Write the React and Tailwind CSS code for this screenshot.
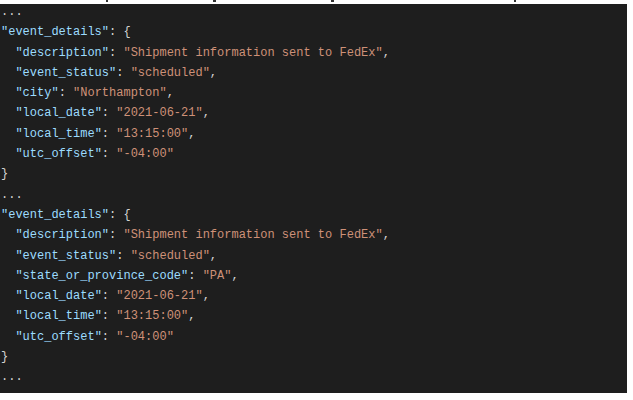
const K = 'text-[#9cdcfe]';
const S = 'text-[#ce9178]';
const P = 'text-[#d4d4d4]';

function Line({ indent, k, v, comma = true }) {
  return (
    <div className="whitespace-pre">
      <span className={P}>{indent ? '  ' : ''}</span>
      <span className={K}>"{k}"</span>
      <span className={P}>: </span>
      <span className={S}>"{v}"</span>
      {comma && <span className={P}>,</span>}
    </div>
  );
}

function Block({ rows }) {
  return (
    <>
      <div className="whitespace-pre">
        <span className={K}>"event_details"</span>
        <span className={P}>: {'{'}</span>
      </div>
      {rows.map(([k, v], i) => (
        <Line key={k} indent k={k} v={v} comma={i < rows.length - 1} />
      ))}
      <div className={P}>{'}'}</div>
      <div className={P}>...</div>
    </>
  );
}

const first = [
  ['description', 'Shipment information sent to FedEx'],
  ['event_status', 'scheduled'],
  ['city', 'Northampton'],
  ['local_date', '2021-06-21'],
  ['local_time', '13:15:00'],
  ['utc_offset', '-04:00'],
];

const second = [
  ['description', 'Shipment information sent to FedEx'],
  ['event_status', 'scheduled'],
  ['state_or_province_code', 'PA'],
  ['local_date', '2021-06-21'],
  ['local_time', '13:15:00'],
  ['utc_offset', '-04:00'],
];

export default function App() {
  return (
    <div className="w-[633px] h-[400px] bg-white overflow-hidden">
      {/* cut-off descenders from the text above */}
      <div className="flex h-[4px] items-start">
        <span className="ml-[106px] w-[2px] h-[2px] bg-[#333]" />
        <span className="ml-[105px] w-[3px] h-[2px] bg-[#333]" />
        <span className="ml-[115px] w-[3px] h-[2px] bg-[#333]" />
        <span className="ml-[180px] w-[2px] h-[2px] bg-[#333]" />
      </div>
      <div className="w-[627px] h-[389px] bg-[#1e1e1e] overflow-hidden">
        <pre className="-mt-[2px] pl-[1px] font-['Liberation_Mono',monospace] text-[12px] leading-[20.3px] text-[#d4d4d4]">
          <div>...</div>
          <Block rows={first} />
          <Block rows={second} />
        </pre>
      </div>
    </div>
  );
}
